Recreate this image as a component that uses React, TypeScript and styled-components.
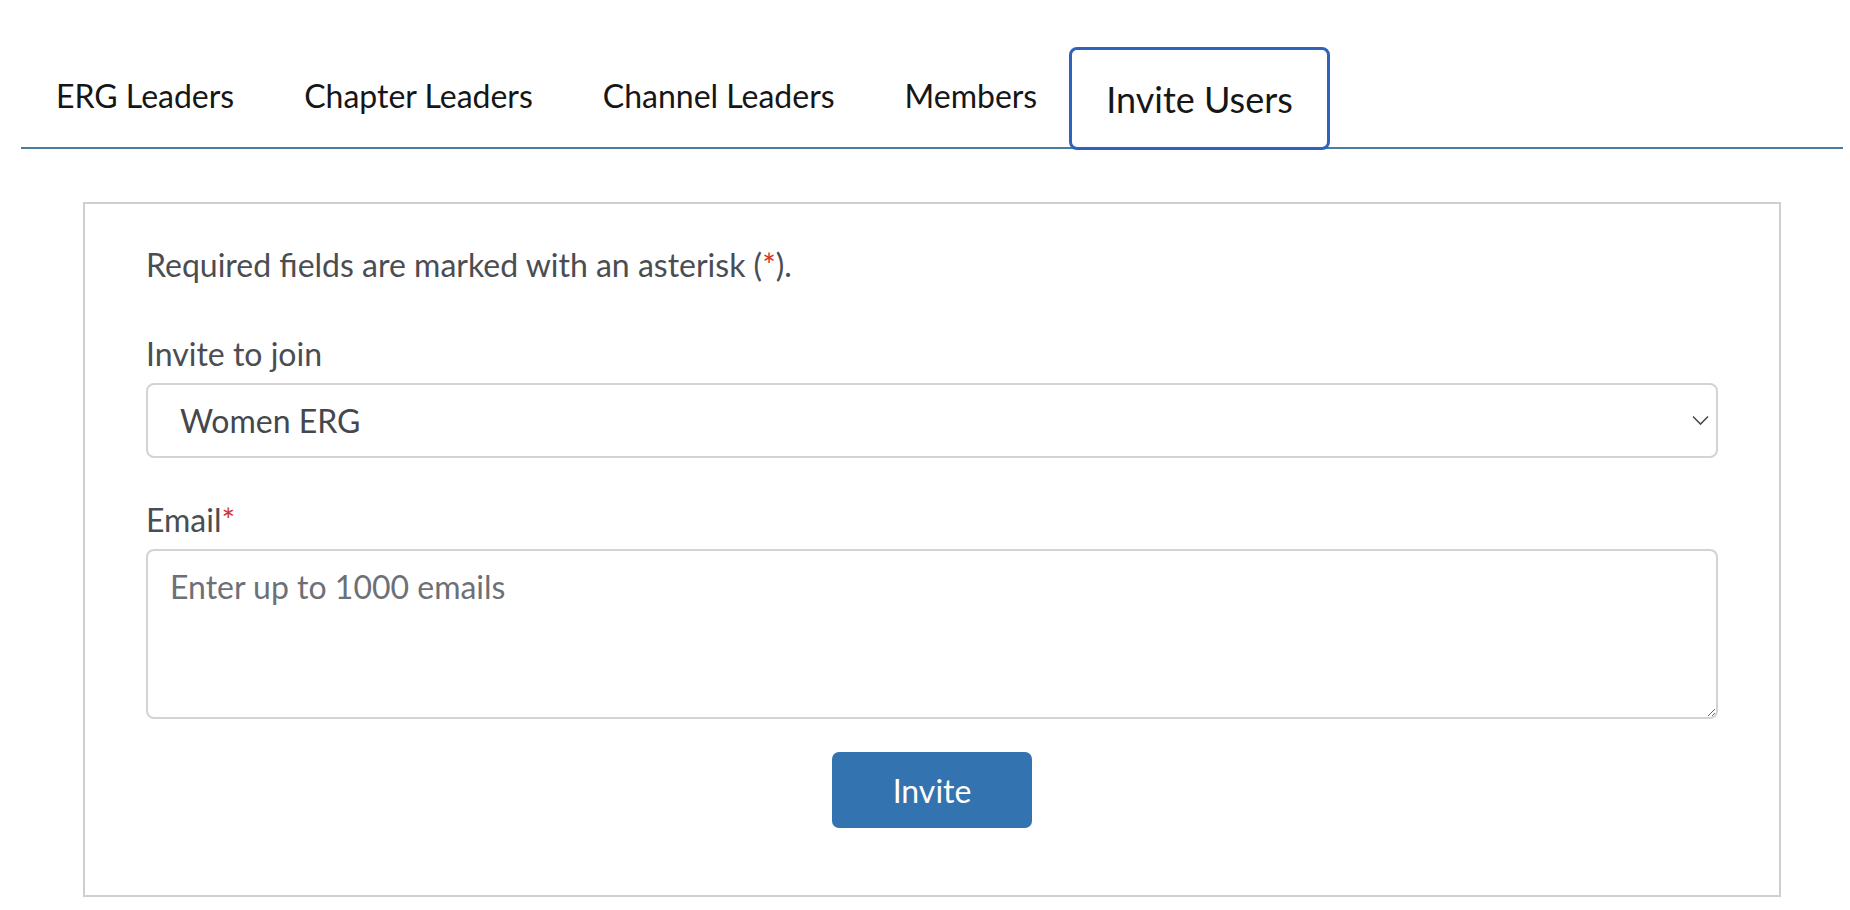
import React from "react";
import styled, { createGlobalStyle } from "styled-components";

const GlobalStyle = createGlobalStyle`
  html, body {
    margin: 0;
    padding: 0;
    background: #ffffff;
    font-family: Lato, "Open Sans", sans-serif;
  }
  * { box-sizing: border-box; }
`;

const Page = styled.div`
  width: 1850px;
  min-height: 910px;
  background: #ffffff;
`;

const TabBar = styled.nav`
  display: flex;
  align-items: flex-end;
  margin: 0 7px 0 21px;
  padding-top: 47px;
  border-bottom: 2px solid #4a7ba0;
`;

const Tab = styled.button<{ $active?: boolean }>`
  display: flex;
  align-items: center;
  height: ${(p) => (p.$active ? "103px" : "100px")};
  margin: ${(p) => (p.$active ? "0 0 -3px -3px" : "0")};
  padding: ${(p) => (p.$active ? "0 34px" : "0 35px 3px")};
  background: #ffffff;
  border: ${(p) => (p.$active ? "3px solid #2e63b9" : "none")};
  border-radius: 8px;
  position: relative;
  font-family: Lato, sans-serif;
  font-size: ${(p) => (p.$active ? "36px" : "32px")};
  color: #161616;
  cursor: pointer;
  white-space: nowrap;
`;

const Panel = styled.section`
  width: 1698px;
  margin: 53px 0 0 83px;
  padding: 42px 61px 67px;
  border: 2px solid #cfcfcf;
  display: flex;
  flex-direction: column;
  align-items: stretch;
`;

const Note = styled.p`
  margin: 0 0 51px;
  font-size: 32px;
  line-height: 38px;
  color: #4a4d52;
`;

const Star = styled.span`
  color: #d0342c;
`;

const Label = styled.label`
  display: block;
  margin-bottom: 10px;
  font-size: 32px;
  line-height: 38px;
  color: #4a4d52;
`;

const Field = styled.div<{ $gap: number }>`
  display: flex;
  flex-direction: column;
  margin-bottom: ${(p) => p.$gap}px;
`;

const SelectWrap = styled.div`
  position: relative;
`;

const Select = styled.select`
  appearance: none;
  width: 100%;
  height: 75px;
  padding: 0 60px 0 32px;
  border: 2px solid #d2d3d6;
  border-radius: 8px;
  background: #ffffff;
  font-family: Lato, sans-serif;
  font-size: 32px;
  color: #44474c;
`;

const Chevron = styled.svg`
  position: absolute;
  right: 9px;
  top: 32px;
  pointer-events: none;
`;

const TextArea = styled.textarea`
  width: 100%;
  height: 170px;
  padding: 16px 22px;
  border: 2px solid #d2d3d6;
  border-radius: 8px;
  resize: vertical;
  font-family: Lato, sans-serif;
  font-size: 32px;
  line-height: 40px;
  color: #45484d;
  &::placeholder {
    color: #6d7076;
  }
`;

const Actions = styled.div`
  display: flex;
  justify-content: center;
`;

const InviteButton = styled.button`
  width: 200px;
  height: 76px;
  border: none;
  border-radius: 7px;
  background: #3373af;
  color: #ffffff;
  font-family: Lato, sans-serif;
  font-size: 32px;
  cursor: pointer;
`;

const tabs = ["ERG Leaders", "Chapter Leaders", "Channel Leaders", "Members", "Invite Users"];

export default function App() {
  return (
    <Page>
      <GlobalStyle />
      <TabBar>
        {tabs.map((t) => (
          <Tab key={t} $active={t === "Invite Users"}>
            {t}
          </Tab>
        ))}
      </TabBar>
      <Panel>
        <Note>
          Required fields are marked with an asterisk (<Star>*</Star>).
        </Note>
        <Field $gap={43}>
          <Label htmlFor="invite-target">Invite to join</Label>
          <SelectWrap>
            <Select id="invite-target" defaultValue="women">
              <option value="women">Women ERG</option>
            </Select>
            <Chevron width="17" height="11" viewBox="0 0 17 11">
              <path d="M1 1.5l7.5 7.5 7.5-7.5" fill="none" stroke="#4a4d52" strokeWidth="1.6" />
            </Chevron>
          </SelectWrap>
        </Field>
        <Field $gap={33}>
          <Label htmlFor="invite-emails">
            Email<Star>*</Star>
          </Label>
          <TextArea id="invite-emails" placeholder="Enter up to 1000 emails" />
        </Field>
        <Actions>
          <InviteButton>Invite</InviteButton>
        </Actions>
      </Panel>
    </Page>
  );
}
